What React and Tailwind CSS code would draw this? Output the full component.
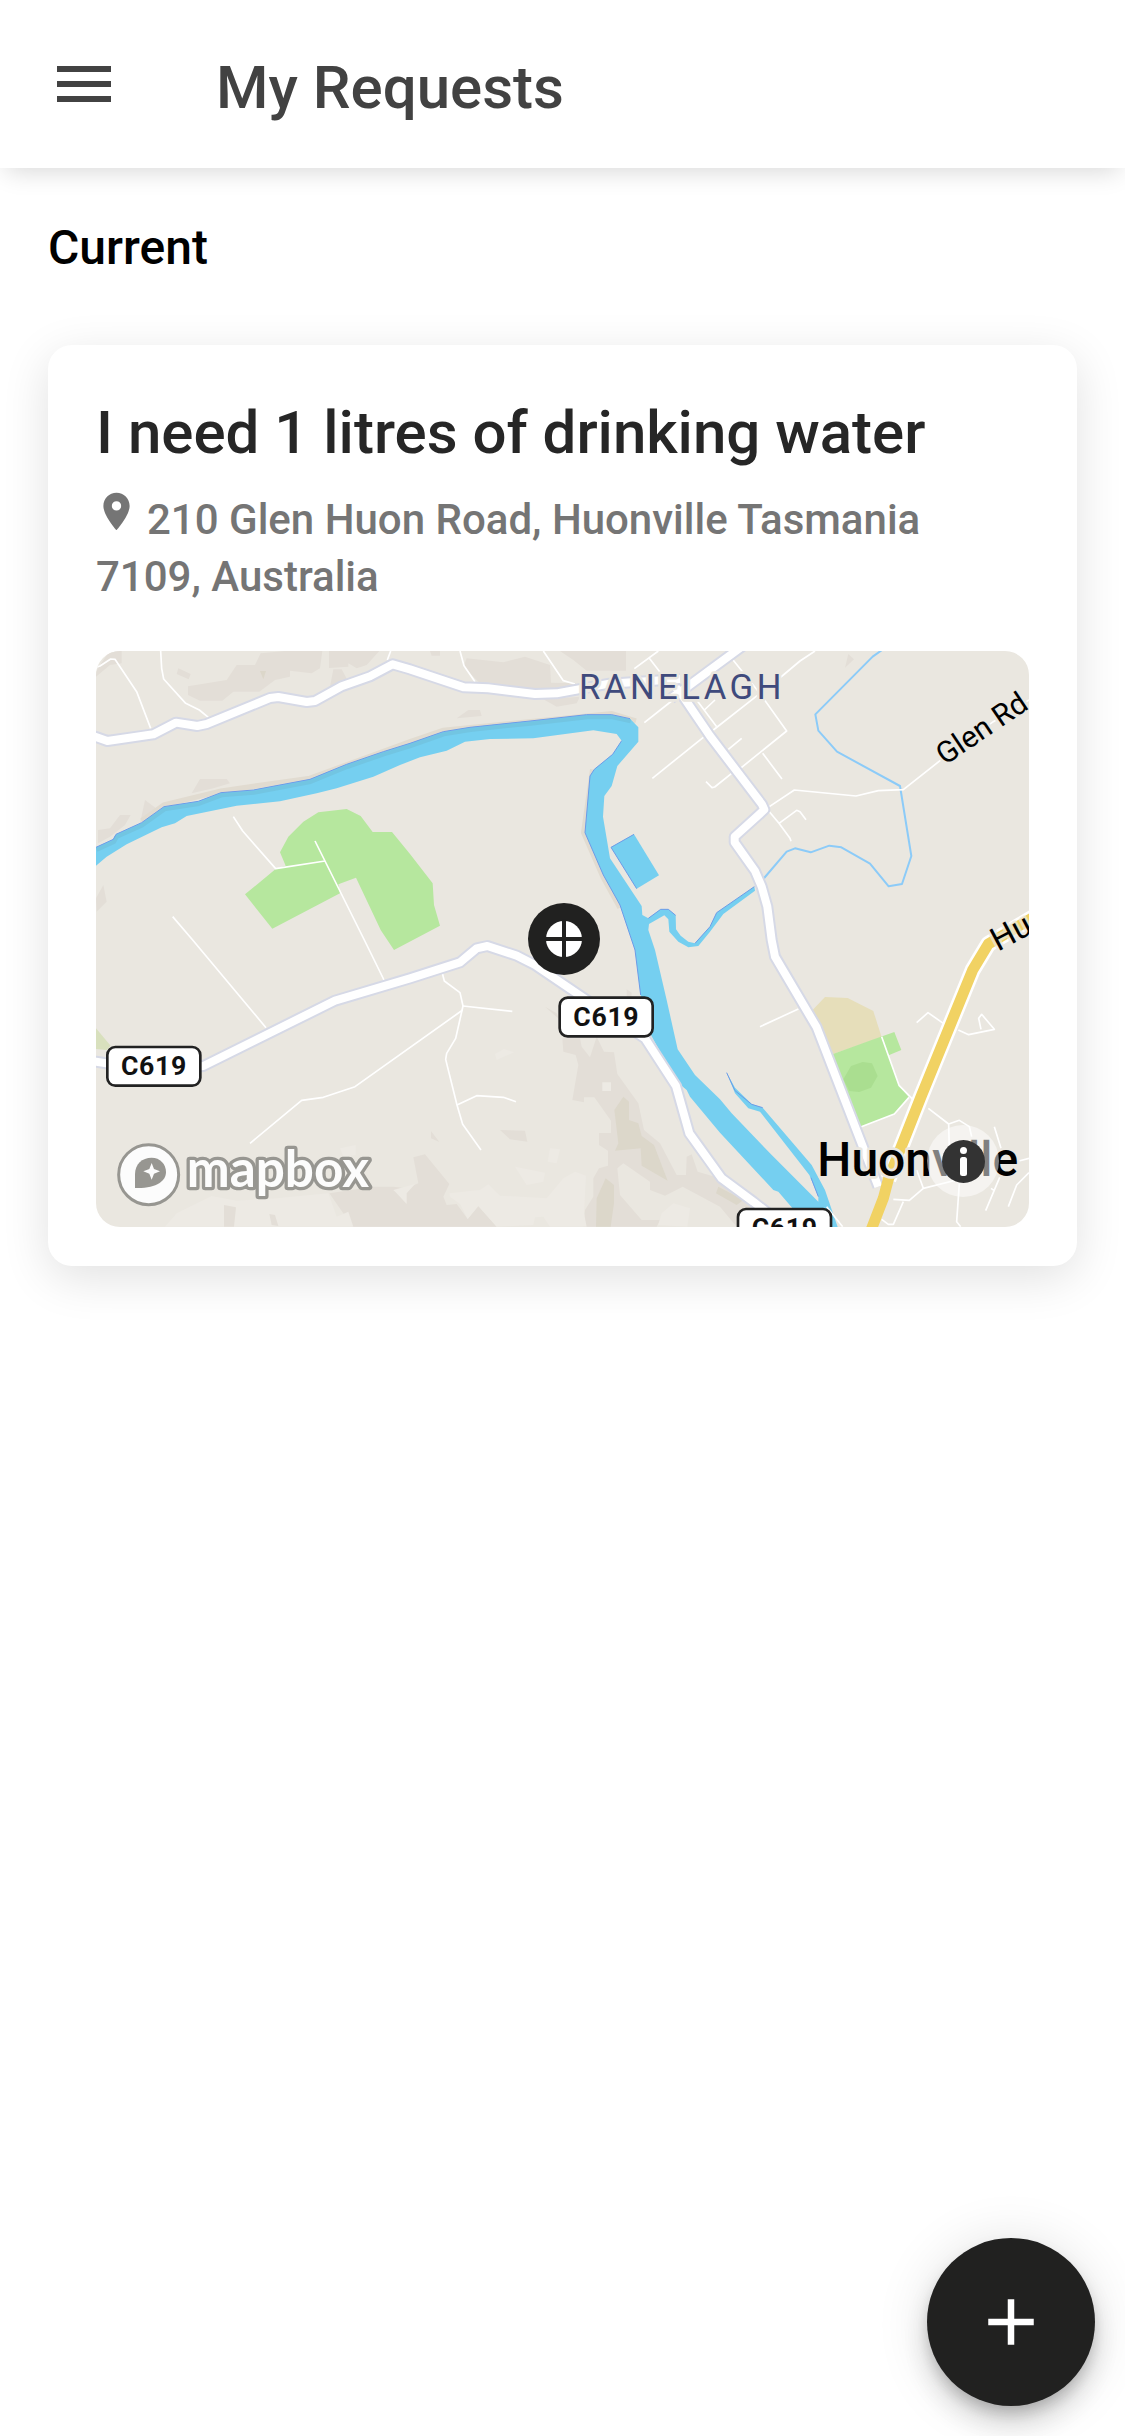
import React from "react";
import { MdAdd, MdLocationOn, MdMenu } from "react-icons/md";

const LAND = "#eae7e0";

const majorRoads = [
  "M-20 252 0 258 34 270 172 250 240 215 304 225 332 219 522 141 547 138 632 153 657 150 737 106 822 76 890 40 942 55 1104 109 1177 112 1317 129 1382 127 1540 98 1752 84",
  "M1725 142 1757 120 1842 57 1940 -15",
  "M1740 110 1757 130 1842 255 1998 460 2005 476 1916 557 1916 574 1977 660 1997 707 2014 767 2027 867 2037 917 2162 1129 2347 1607",
  "M-20 1230 0 1232 180 1260 322 1245 717 1049 942 982 1092 934 1142 892 1174 885 1262 914 1317 942 1472 1047 1647 1162 1740 1305 1780 1447 1877 1582 1972 1652 2110 1760",
];

const minorRoads = [
  "M0 49 12 45 44 24 57 25 122 122 164 232",
  "M194 0 197 52 203 84 269 157 310 177 337 199",
  "M884 0 874 27",
  "M1092 0 1104 44 1137 92",
  "M1342 0 1402 89 1437 99",
  "M1687 0 1615 53M1660 22 1697 70",
  "M1645 215 1727 150",
  "M1669 382 1822 259",
  "M1830 392 1848 410 1856 408 1907 367 1937 349 2072 240 1990 125 1907 22",
  "M2157 0 2112 30 2062 72 1852 237",
  "M1802 147 1862 227M1825 177 1857 147",
  "M2000 307 2058 384M1897 295 1937 262",
  "M2020 467 2095 417 2280 435 2347 419 2422 416 2532 329 2692 212 2799 147",
  "M2020 482 2049 517 2082 562 2085 571M2049 517 2102 478 2112 482 2130 506",
  "M412 497 440 540 539 653 687 630",
  "M657 570 805 867 864 987",
  "M230 797 290 867 510 1130",
  "M1039 967 1045 990 1092 1025 1101 1065 1079 1162 1052 1207 1049 1225 1083 1362 1100 1420 1155 1497",
  "M1101 1065 1249 1081M1100 1077 777 1307 682 1339 617 1348 462 1477",
  "M1083 1362 1142 1334 1222 1339 1260 1352",
  "M1992 1127 2107 1074",
  "M2357 1157 2409 1303 2454 1349M2439 1339 2395 1389 2292 1429",
];

const townRoads =
  "M620 278 654 248 700 280M745 300 776 314 853 298 815 253 806 265 813 298M655 535 716 582 748 571 778 590 785 620M716 582 718 660M853 590 873 655 870 740 827 842M843 775 853 782M957 685 900 700M957 728 920 765 895 830M550 808 598 811 640 775 740 750M640 775 620 720M580 815 550 883 535 883 515 868M748 760 740 875 752 890M350 830 398 890";

const northBank =
  "M0 589 52 565 60 550 137 515 204 467 307 451 375 425 472 417 642 385 752 340 862 302 942 277 1042 242 1122 229 1302 210 1472 191 1547 191 1602 203";

function Shield({ x, y }) {
  return (
    <g transform={`translate(${x} ${y})`}>
      <rect x="4" y="4" width="279" height="116" rx="24" fill="#fff" stroke="#222" strokeWidth="8" />
      <text x="144" y="88" textAnchor="middle" fontSize="80" fill="#111" className="font-bold tracking-wide">
        C619
      </text>
    </g>
  );
}

function MapView() {
  return (
    <svg
      viewBox="0 0 2799 1728"
      preserveAspectRatio="xMidYMid slice"
      className="block h-[576px] w-full font-['Roboto',sans-serif]"
      role="img"
      aria-label="Map of Huonville"
    >
      <rect width="2799" height="1728" fill={LAND} />

      {/* hill shading */}
      <g fill="#e3ded7">
        <path
          transform="translate(-18 -33)"
          d="M294 139 410 120 440 75 495 75 512 40 585 33 697 33 690 85 665 100 600 92 600 110 555 120 508 155 430 155 397 182 330 182 294 165ZM18 95 40 60 60 33 95 33 95 70 60 75 18 110ZM775 33 868 33 830 75 800 85 775 70ZM265 85 302 102 296 118 260 102ZM330 417 410 417 420 430 370 445 305 460ZM730 88 755 88 775 125 720 140ZM717 33H775V80L717 84ZM24 570 60 565 90 525 122 525 105 555 60 590 24 610ZM165 480 205 510 150 550ZM40 735 50 785 20 815 18 775Z"
        />
        <path
          transform="translate(912 -33)"
          d="M200 55 310 67 375 50 450 75 453 128 530 130 430 165 240 130 190 80ZM480 33 678 33 678 92 560 92 520 60ZM170 235 205 210 240 210 245 228ZM430 178 540 170 530 190 470 200ZM90 33H120V47H95ZM1345 42 1362 58 1335 83Z"
        />
        <path
          transform="translate(912 837)"
          d="M487 325 540 325 545 350 570 382 590 320 612 365 642 367 652 432 715 520 732 600 780 640 830 735 858 735 860 680 875 673 893 725 960 745 1060 820 1010 890 960 830 848 770 795 797 750 780 750 755 670 700 652 715 660 795 725 870 780 870 770 890 550 890 555 840 580 800 580 745 597 715 624 707 624 662 597 645 597 609 633 609 633 572 583 502 552 502 552 517 517 510 535 405 527 375 490 365ZM-212 790 -80 770 -20 770 20 775 55 760 40 682 75 673 148 762 130 800 140 825 170 822 203 867 235 828 290 890 -142 890ZM300 600 375 602 382 635 330 628ZM93 603 118 636 93 625ZM435 230 470 250 480 270ZM680 178 695 188 694 205H680Z"
        />
      </g>
      <g fill="#edeae4">
        <path
          transform="translate(912 837)"
          d="M148 790 240 780 265 763 300 797 440 805 490 745 525 725 558 737 552 850 560 890 450 890 430 860 405 862 400 885 290 890 235 828 203 867 180 822 150 800ZM450 655 480 658 470 700 443 695ZM345 710 435 728 430 755 380 765ZM820 820 870 835 862 890 775 885 785 850ZM285 372 312 357 342 367 290 390ZM607 457H633V483H607ZM-20 780 45 762 20 790V822L-10 790Z"
        />
        <path
          transform="translate(-18 837)"
          d="M225 890 260 850 365 798 440 812 560 805 715 790 740 860 775 845 790 890ZM750 655 797 645V675L760 680Z"
        />
      </g>
      <path
        transform="translate(-18 837)"
        fill="#e3ded7"
        d="M402 825 438 832 432 890H402ZM538 852 555 855 565 888 545 885Z"
      />
      <g fill="#dcd7ca">
        <path
          transform="translate(912 837)"
          d="M643 540 670 500 687 515 687 570 715 580 725 618 762 645 803 752 725 707 722 655 645 662 655 640ZM617 745 642 765 642 820 632 890 588 890 590 805ZM955 770 1030 810 1010 825 948 790Z"
        />
        <path d="M492 60H510L502 85Z" />
      </g>
      <path d="M0 1132 44 1184 32 1197 0 1194Z" fill="#d8e0bd" />

      {/* parks */}
      <path
        fill="#b6e79e"
        d="M447 730 539 654 569 644 552 604 577 557 622 512 667 484 752 474 794 495 830 543 888 543 942 609 1010 697 1014 762 1032 824 894 897 854 837 847 822 780 680 727 700 732 727 529 833Z"
      />
      <path d="M2150 1077 2187 1038 2255 1041 2332 1080 2357 1159 2209 1210 2172 1132Z" fill="#e6deba" />
      <path
        fill="#b6e79e"
        d="M2209 1210 2327 1167 2395 1143 2416 1197 2378 1213 2409 1303 2439 1339 2395 1389 2292 1429Z"
      />
      <path d="M2242 1285 2265 1245 2300 1233 2328 1237 2345 1275 2325 1310 2290 1323 2260 1320Z" fill="#aade90" />

      {/* river and creeks */}
      <path
        fill="none"
        stroke="#e1dbd0"
        strokeWidth="16"
        d="M137 510 204 462 375 420 642 382 942 272 1042 238 1547 188 1620 210M1490 355 1463 545 1522 680 1572 770"
      />
      <path
        fill="#75cff0"
        d="M0 589 52 565 60 550 137 515 204 467 307 451 375 425 472 417 642 385 752 340 862 302 942 277 1042 242 1122 229 1302 210 1472 191 1547 191 1602 203 1627 229V272L1564 345 1547 405 1525 435 1521 497 1542 622 1637 765 1639 792 1657 802 1694 775H1717L1739 793 1740 835 1754 854 1777 872 1797 877 1842 827 1862 785 1975 707 1977 719 1882 789 1842 842 1807 885 1777 889 1747 872 1720 842 1717 805 1705 793 1659 819 1657 837 1677 897 1712 1047 1745 1195 1797 1272 1872 1345 1907 1387 2022 1507 2167 1652 2167 1637 2140 1572 1992 1382 1957 1372 1917 1327 1892 1265 1917 1310 1967 1359 2000 1370 2147 1542 2187 1617 2225 1728H2130L2087 1669 2047 1622 2032 1617 1872 1445 1782 1337 1772 1317 1740 1290 1662 1147 1634 1032 1617 897 1597 837 1572 762 1522 672 1467 545 1482 375 1495 355 1550 310 1577 269 1562 249 1492 238 1312 262 1182 264 1107 272 1052 299 972 319 912 342 832 377 722 412 662 427 552 451 422 464 272 495 237 517 197 529 92 580 32 617 0 644Z"
      />
      <g fill="none" strokeLinejoin="round">
        <path transform="translate(2 8)" d={northBank} stroke="#72c5e2" strokeWidth="12" />
        <path d={northBank} stroke="#6c9be8" strokeWidth="3" />
        <path
          stroke="#6c9be8"
          strokeWidth="3"
          d="M1577 269 1550 310 1495 355 1482 375 1467 545 1522 672 1572 762 1597 837 1617 897 1634 1032M1657 802 1694 775H1717L1739 793M1797 877 1842 827 1862 785 1975 707M1892 1265 1917 1319 1967 1360 2000 1370M2145 1580 2167 1637"
        />
        <path
          stroke="#8ccbf8"
          strokeWidth="6"
          d="M2358 -3 2330 17 2158 190 2167 239 2223 302 2412 405 2446 615 2418 699 2378 706 2322 638 2236 589 2200 584 2144 604 2097 592 2072 602 2002 684"
        />
      </g>
      <path d="M1545 589 1614 550 1689 673 1622 713Z" fill="#75cff0" />
      <path d="M1622 713 1545 589 1614 550" fill="none" stroke="#6c9be8" strokeWidth="3" />

      {/* roads */}
      <g fill="none" strokeLinejoin="round">
        <g stroke="#fff" strokeWidth="5">
          {minorRoads.map((d) => (
            <path key={d} d={d} />
          ))}
          <path transform="translate(1842 837)" d={townRoads} />
        </g>
        <g stroke="#d6d9e6" strokeWidth="36">
          {majorRoads.map((d) => (
            <path key={d} d={d} />
          ))}
        </g>
        <g stroke="#fff" strokeWidth="24">
          {majorRoads.map((d) => (
            <path key={d} d={d} />
          ))}
        </g>
        <path
          stroke="#fff"
          strokeWidth="48"
          d="M2377 1585 2420 1477 2475 1337 2630 957 2677 879 2815 797"
        />
        <path
          stroke="#f1d263"
          strokeWidth="33"
          d="M2324 1740 2362 1642 2377 1585 2420 1477 2475 1337 2630 957 2677 879 2815 797"
        />
      </g>

      <Shield x={30} y={1184} />
      <Shield x={1387} y={1036} />
      <Shield x={1922} y={1670} />

      {/* place and street names */}
      <g stroke={LAND} strokeWidth="16" strokeLinejoin="round" paintOrder="stroke">
        <text x="1449" y="144" fontSize="104" fill="#3f4a7c" className="tracking-widest">
          RANELAGH
        </text>
        <text transform="translate(2546 344) rotate(-34)" fontSize="90" fill="#000">
          Glen Rd
        </text>
        <text transform="translate(2706 902) rotate(-28)" fontSize="98" fill="#000" strokeOpacity="0.7">
          Hu
        </text>
        <text x="2164" y="1574" fontSize="144" fill="#000" className="font-medium">
          Huonville
        </text>
      </g>

      {/* request position */}
      <circle cx="1404" cy="864" r="108" fill="#212120" />
      <circle cx="1404" cy="864" r="54" fill="#fff" />
      <path d="M1404 805V923M1345 864H1463" stroke="#212120" strokeWidth="12" />

      <a href="#mapbox" aria-label="Mapbox">
        <circle cx="158" cy="1571" r="90" fill="#fcfcfc" stroke="#979691" strokeWidth="9" />
        <path d="M117 1611V1570C117 1539 138 1520 167 1520C192 1520 210 1539 210 1563C210 1590 182 1613 117 1611Z" fill="#979691" />
        <path d="M167 1536 174 1554 192 1561 174 1568 167 1586 160 1568 142 1561 160 1554Z" fill="#fcfcfc" />
        <text
          x="272"
          y="1607"
          fontSize="154"
          fill="#fcfcfc"
          stroke="#979691"
          strokeWidth="20"
          strokeLinejoin="round"
          paintOrder="stroke"
          className="font-['Lato',sans-serif] font-bold"
        >
          mapbox
        </text>
      </a>
    </svg>
  );
}

function RequestCard({ title, address }) {
  return (
    <article className="rounded-3xl bg-white px-12 pt-12 pb-[39px] shadow-[0_12px_48px_rgba(0,0,0,0.12)]">
      <h3 className="text-[60px] leading-[80px] font-medium text-[#262626]">{title}</h3>
      <p className="mt-4 text-[42px] leading-[57px] font-medium text-[#757575]">
        <MdLocationOn className="mr-2 -ml-0.5 inline-block size-[45px] align-baseline" aria-hidden="true" />
        {address}
      </p>
      <div className="relative mt-[46px] overflow-hidden rounded-3xl">
        <MapView />
        <button
          type="button"
          aria-label="Map information"
          className="absolute right-[30px] bottom-[30px] flex size-[72px] items-center justify-center rounded-full bg-white/50"
        >
          <svg viewBox="0 0 43 43" className="size-[43px]" aria-hidden="true">
            <circle cx="21.5" cy="21.5" r="21.5" fill="#333" />
            <circle cx="21.5" cy="10.5" r="3.5" fill="#fff" />
            <rect x="18" y="17" width="7" height="19" rx="2.5" fill="#fff" />
          </svg>
        </button>
      </div>
    </article>
  );
}

export default function App() {
  return (
    <div className="min-h-screen bg-white font-['Roboto',sans-serif]">
      <header className="relative flex h-[168px] items-start bg-white px-12 pt-12 text-[#424242] shadow-[0_9px_24px_-6px_rgba(0,0,0,0.16)]">
        <button type="button" aria-label="Open menu" className="size-[72px]">
          <MdMenu className="size-[72px]" />
        </button>
        <h1 className="ml-24 text-[60px] leading-[80px] font-medium">My Requests</h1>
      </header>
      <main className="p-12">
        <h2 className="text-5xl leading-[63px] font-medium text-black">Current</h2>
        <div className="mt-[66px]">
          <RequestCard
            title="I need 1 litres of drinking water"
            address="210 Glen Huon Road, Huonville Tasmania 7109, Australia"
          />
        </div>
      </main>
      <button
        type="button"
        aria-label="New request"
        className="fixed right-[30px] bottom-[30px] flex size-[168px] items-center justify-center rounded-full bg-[#212120] text-white shadow-[0_9px_15px_-3px_rgba(0,0,0,0.2),0_18px_30px_0_rgba(0,0,0,0.14),0_3px_54px_0_rgba(0,0,0,0.12)]"
      >
        <MdAdd className="size-[78px]" />
      </button>
    </div>
  );
}
